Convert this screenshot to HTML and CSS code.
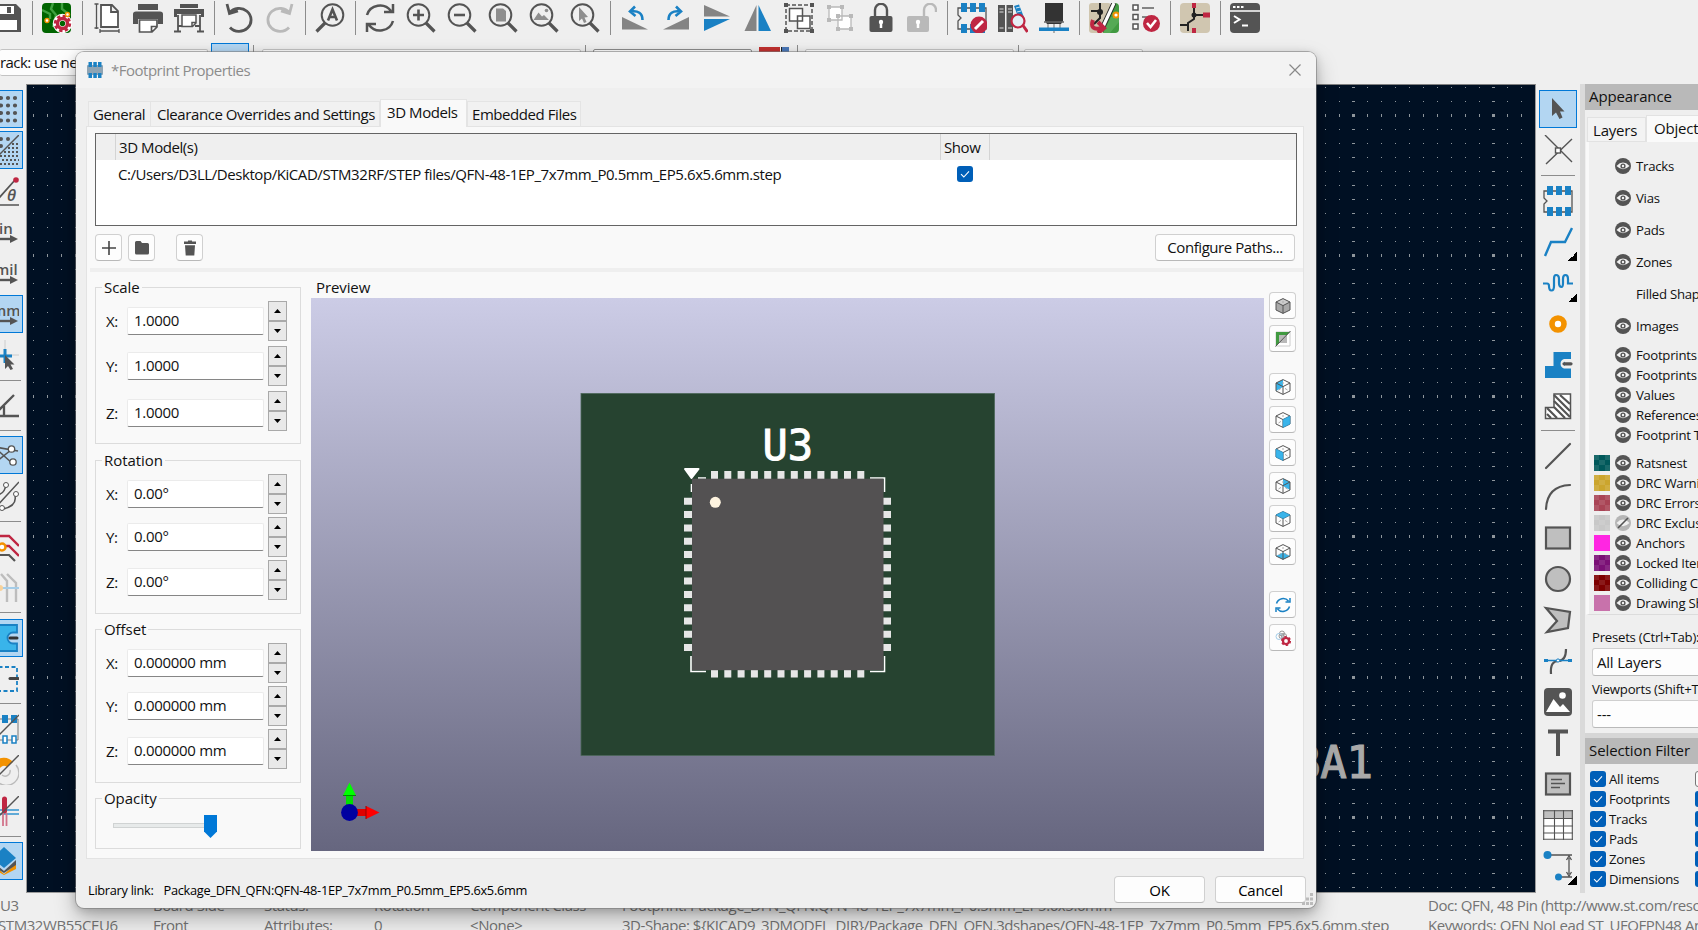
FILE: index.html
```html
<!DOCTYPE html>
<html lang="en">
<head>
<meta charset="utf-8">
<title>Footprint Properties</title>
<link rel="stylesheet" href="styles.css">
</head>
<body>
<svg class="defs" aria-hidden="true">
  <symbol id="eye" viewBox="0 0 16 16"><circle cx="8" cy="8" r="8" fill="#545454"/><path d="M1.5 8Q8 1.2 14.5 8Q8 14.4 1.5 8Z" fill="#f2f2f2"/><circle cx="8" cy="8" r="2.6" fill="#545454"/><circle cx="8" cy="8" r="1.2" fill="#f2f2f2"/></symbol>
  <symbol id="eye-off" viewBox="0 0 16 16"><circle cx="8" cy="8" r="8" fill="#b5b5b5"/><path d="M1.5 8Q8 1.2 14.5 8Q8 14.4 1.5 8Z" fill="#f0f0f0"/><path d="M3 13L13 3" stroke="#545454" stroke-width="1.6"/></symbol>
  <symbol id="check" viewBox="0 0 16 16"><rect width="16" height="16" rx="3" fill="#005fb8"/><path d="M4 8.2L6.8 11L12 5.4" fill="none" stroke="#fff" stroke-width="1.1"/></symbol>
  <symbol id="cube" viewBox="0 0 16 16"><path d="M8 .6L15 4V12L8 15.4L1 12V4ZM1 4L8 7.6L15 4M8 7.6V15.4" fill="none" stroke="#545454" stroke-width="1"/><path d="M8 3V5M3.5 11L6 9.4M12.5 11L10 9.4" stroke="#aaa" fill="none"/></symbol>
  <symbol id="lens" viewBox="0 0 30 30"><circle cx="12.5" cy="12" r="10.8" fill="none" stroke="#545454" stroke-width="2"/><path d="M20 20L28.5 28.5" stroke="#545454" stroke-width="3.2"/></symbol>
  <symbol id="swatch" viewBox="0 0 16 16"><rect width="16" height="16" fill="currentColor"/><path d="M0 0H5V5H0ZM11 0H16V5H11ZM5 5H11V10H5ZM0 10H5V16H0ZM11 10H16V16H11Z" fill="#fff" opacity=".1"/></symbol>
  <symbol id="fp" viewBox="0 0 30 30"><path d="M1 5H29V26H1V18L4 15L1 12Z" fill="none" stroke="#545454" stroke-width="1.3"/><path d="M4 0H10V9H4ZM13 0H19V9H13ZM22 0H28V9H22ZM4 21H10V30H4ZM13 21H19V30H13ZM22 21H28V30H22Z" fill="#1a81c4"/></symbol>
</svg>

<div class="topbar">
  <div class="tool"><svg viewBox="0 0 30 30"><path d="M1 1H24L29 6V29H1Z" fill="#545454"/><path d="M6 3H22V11H6ZM5 17H25V27H5Z" fill="#fff"/><path d="M15 4H19V10H15Z" fill="#545454"/></svg></div><i class="vsep"></i>
  <div class="tool"><svg viewBox="0 0 30 30"><rect width="29" height="30" rx="4" fill="#006400"/><path d="M0 7L8 11V16M11 0L9 6L14 12L11 24M20 0V6L25 10" stroke="#3fa03f" stroke-width="2.4" fill="none"/><g stroke="#bf2642" fill="none"><circle cx="20.5" cy="20.5" r="6.2" stroke="#fff" stroke-width="7"/><circle cx="20.5" cy="20.5" r="5" stroke-width="3.4"/><circle cx="20.5" cy="20.5" r="7.4" stroke-width="2.6" stroke-dasharray="3.4 2.4"/></g><circle cx="5" cy="17.5" r="2" fill="#fff" stroke="#f39200" stroke-width="1.4"/><circle cx="25.5" cy="11.5" r="2" fill="#fff" stroke="#f39200" stroke-width="1.4"/></svg></div><i class="vsep"></i>
  <div class="tool"><svg viewBox="0 0 30 30"><path d="M9 2H20L26 8V24H9ZM19 2V9H26" fill="#fff" stroke="#545454" stroke-width="1.8"/><path d="M4.500 1V26M2.500 1H6.500M2.500 25H6.500M8 28H27M8 26V30M27 26V30" stroke="#545454" stroke-width="1.3"/></svg></div>
  <div class="tool"><svg viewBox="0 0 30 30"><path d="M5 1H25V7H5ZM0 11Q0 8.500 3 8.500H27Q30 8.500 30 11V21H25V16H5V21H0Z" fill="#545454"/><path d="M6.500 17H24V24L19 29H6.500ZM18.500 29V23.500H24" fill="#fff" stroke="#545454" stroke-width="1.7"/></svg></div>
  <div class="tool"><svg viewBox="0 0 30 30"><path d="M6 1H24V5H6ZM0 6H30V14H27V11H3V14H0Z" fill="#545454"/><path d="M4 12V29M26 12V29M0 28.500H7M23 28.500H30M4 23H9M21 23H26" stroke="#545454" stroke-width="1.8"/><path d="M8 12H22V20L18.500 23.500H8ZM18 23V19.500H22" fill="#fff" stroke="#545454" stroke-width="1.5"/></svg></div><i class="vsep"></i>
  <div class="tool"><svg viewBox="0 0 30 30"><path d="M3 1L5.500 10.500L14 8M5.500 10A12 11.500 0 1 1 6 24.500" fill="none" stroke="#545454" stroke-width="2.800"/></svg></div>
  <div class="tool"><svg viewBox="0 0 30 30"><path d="M27 1L24.500 10.500L16 8M24.500 10A12 11.500 0 1 0 24 24.500" fill="none" stroke="#b9b9b9" stroke-width="2.800"/></svg></div><i class="vsep"></i>
  <div class="tool"><svg viewBox="0 0 30 30"><circle cx="17.500" cy="12" r="10.800" fill="none" stroke="#545454" stroke-width="2"/><path d="M10 20L1.500 28.500" stroke="#545454" stroke-width="3.200"/><path d="M13 17.500L17.500 6.500L22 17.500M14.500 14H20.500" fill="none" stroke="#545454" stroke-width="2.600"/></svg></div><i class="vsep"></i>
  <div class="tool"><svg viewBox="0 0 30 30"><path d="M2 12A13.500 13 0 0 1 26 8M28 1V9H19M28 18A13.500 13 0 0 1 4 22M2 29V21H11" fill="none" stroke="#545454" stroke-width="2.500"/></svg></div>
  <div class="tool"><svg viewBox="0 0 30 30"><use href="#lens"/><path d="M7 12H18M12.500 6.500V17.500" stroke="#545454" stroke-width="2.600"/></svg></div>
  <div class="tool"><svg viewBox="0 0 30 30"><use href="#lens"/><path d="M7 12H18" stroke="#545454" stroke-width="2.600"/></svg></div>
  <div class="tool"><svg viewBox="0 0 30 30"><use href="#lens"/><path d="M8 5.500H15L18 8V18.500H8Z" fill="#8e8e8e"/></svg></div>
  <div class="tool"><svg viewBox="0 0 30 30"><use href="#lens"/><path d="M4.500 17L9.500 9.500L13 13.500L15 12L20 17Z" fill="#8e8e8e"/><circle cx="17.500" cy="7.500" r="1.800" fill="#8e8e8e"/></svg></div>
  <div class="tool"><svg viewBox="0 0 30 30"><use href="#lens"/><path d="M9 4V18L12 15.500L14 20L16.500 19L14.500 14.500L18 14Z" fill="#8e8e8e"/></svg></div><i class="vsep"></i>
  <div class="tool"><svg viewBox="0 0 30 30"><path d="M2 14L28 26.500H2Z" fill="#848484"/><path d="M22.500 17C22.500 10 18 7.500 11 8.500M15 3.500L10 8.500L15.500 13" fill="none" stroke="#1a81c4" stroke-width="2.600"/></svg></div>
  <div class="tool"><svg viewBox="0 0 30 30"><path d="M28 14L2 26.500H28Z" fill="#848484"/><path d="M7.500 17C7.500 10 12 7.500 19 8.500M15 3.500L20 8.500L14.500 13" fill="none" stroke="#1a81c4" stroke-width="2.600"/></svg></div>
  <div class="tool"><svg viewBox="0 0 30 30"><path d="M2 2L28 13.500H2Z" fill="#848484"/><path d="M2 16H28L2 28Z" fill="#1a81c4"/></svg></div>
  <div class="tool"><svg viewBox="0 0 30 30"><path d="M13.500 2V28H1.500Z" fill="#848484"/><path d="M15.500 2V28H28Z" fill="#1a81c4"/></svg></div>
  <div class="tool"><svg viewBox="0 0 30 30"><rect x="2" y="2" width="26" height="26" fill="none" stroke="#545454" stroke-width="1.500" stroke-dasharray="4 2"/><path d="M0 0H4V4H0ZM26 0H30V4H26ZM0 26H4V30H0ZM26 26H30V30H26Z" fill="#545454"/><path d="M5.500 5.500H18.500V18H5.500ZM13.500 13H26V25.500H13.500Z" fill="#fff" stroke="#545454" stroke-width="1.500"/></svg></div>
  <div class="tool"><svg viewBox="0 0 30 30"><path d="M4 4H17V17H4ZM13 13H26V26H13Z" fill="#fff" stroke="#b9b9b9" stroke-width="1.300"/><path d="M2 2H6V6H2ZM15 2H19V6H15ZM2 15H6V19H2ZM11 11H15V15H11ZM24 11H28V15H24ZM11 24H15V28H11ZM24 24H28V28H24Z" fill="#b9b9b9"/></svg></div>
  <div class="tool"><svg viewBox="0 0 30 30"><path d="M9 14V7A6 6.200 0 0 1 21 7V14" fill="none" stroke="#545454" stroke-width="2.400"/><rect x="3.500" y="13" width="23" height="16" rx="2" fill="#545454"/><path d="M15 18V25" stroke="#fff" stroke-width="2.500"/><circle cx="15" cy="19" r="2.200" fill="#fff"/></svg></div>
  <div class="tool"><svg viewBox="0 0 30 30"><path d="M17 14V7A6 6.200 0 0 1 29 7V9" fill="none" stroke="#b9b9b9" stroke-width="2.400"/><rect x="0" y="13" width="22" height="16" rx="2" fill="#b9b9b9"/><path d="M11 18V25" stroke="#fff" stroke-width="2.500"/><circle cx="11" cy="19" r="2.200" fill="#fff"/></svg></div><i class="vsep"></i>
  <div class="tool"><svg viewBox="0 0 30 30"><use href="#fp"/><circle cx="22" cy="22" r="8.500" fill="#bf2642"/><path d="M18 26L26 18" stroke="#fff" stroke-width="3"/></svg></div>
  <div class="tool"><svg viewBox="0 0 30 30"><path d="M0 2H7V29H0ZM8.500 2H15V29H8.500Z" fill="#545454"/><path d="M1.500 6H5.500M1.500 9H5.500M10 6H14M10 9H14M1.500 25H5.500M10 25H14" stroke="#ddd"/><path d="M16 3L21 1.500L27 17L22 19Z" fill="#1a81c4"/><path d="M18 5L22 4M19 9L23 8" stroke="#cfe5f3"/><circle cx="20" cy="18" r="6.500" fill="#e5eef5" stroke="#bf2642" stroke-width="2.200"/><path d="M25 22.500L29.500 29" stroke="#bf2642" stroke-width="3"/></svg></div>
  <div class="tool"><svg viewBox="0 0 30 30"><path d="M9 20V25M21 20V25M15 20V30" stroke="#999" stroke-width="1.500"/><path d="M6 0H24V18L22 21H8L6 18Z" fill="#333"/><path d="M5 19H25" stroke="#666" stroke-width="1.500"/><path d="M0 24.500H30V28H0Z" fill="#1a81c4"/></svg></div><i class="vsep"></i>
  <div class="tool"><svg viewBox="0 0 30 30"><rect width="22" height="30" rx="3" fill="#cfc5ae"/><path d="M26 0Q30 0 30 4V26Q30 30 26 30H14Z" fill="#419a41"/><path d="M30 19L21 30H14L22 14H30Z" fill="#55a955"/><path d="M25 0L12 28" stroke="#222" stroke-width="5"/><path d="M25 0L12 28" stroke="#fff" stroke-width="3.200"/><path d="M11 0V15L5 21M2 8H11" fill="none" stroke="#222" stroke-width="2"/><circle cx="11" cy="9" r="3" fill="#222"/><circle cx="27" cy="12" r="2.600" fill="#fff" stroke="#f39200" stroke-width="2"/><path d="M4 17Q0 28 13 25M9 19L15 25L9 30" fill="none" stroke="#bf2642" stroke-width="4"/></svg></div>
  <div class="tool"><svg viewBox="0 0 30 30"><path d="M3 2H8V7H3ZM3 11.500H8V16.500H3ZM3 21H8V26H3Z" fill="#fff" stroke="#545454" stroke-width="1.500"/><path d="M12 5H24M12 14H18" stroke="#848484" stroke-width="2"/><circle cx="21.500" cy="20.500" r="8.500" fill="#bf2642"/><path d="M17 20L20.500 24L26 17" fill="none" stroke="#fff" stroke-width="2.600"/></svg></div><i class="vsep"></i>
  <div class="tool"><svg viewBox="0 0 30 30"><rect width="30" height="30" rx="4" fill="#d0c6b0"/><path d="M14 5V12M14 12H24M14 12V16L8 20V28M0 22H8" fill="none" stroke="#222" stroke-width="2"/><circle cx="14" cy="12" r="2.500" fill="#222"/><path d="M12 0H16V5H12ZM23 9.500H30V14.500H23ZM12 25H16V30H12Z" fill="#bf2642"/></svg></div><i class="vsep"></i>
  <div class="tool"><svg viewBox="0 0 30 30"><rect width="30" height="30" rx="4" fill="#545454"/><path d="M0 8H30" stroke="#fff" stroke-width="1.500"/><path d="M3 4H5.500M7 4H9.500M11 4H13.500" stroke="#fff" stroke-width="2"/><path d="M4 13L9.500 16.500L4 20M12 22.500H18" fill="none" stroke="#fff" stroke-width="2"/></svg></div>
</div>

<div class="subbar">
  <div class="combo first">rack: use netclass width</div><div class="toggle"></div><i></i><div class="combo c2"></div><i></i><div class="combo c3"></div><div class="flag"></div><i></i><div class="combo c4"></div><i></i><div class="combo c5"></div>
</div>

<div class="workspace">
  <div class="leftbar">
    <div class="tool on"><svg viewBox="0 0 30 30"><g stroke="#545454" stroke-width="4.200" stroke-linecap="round" stroke-dasharray="0 7"><path d="M5 4H27M5 11.500H27M5 19H27M5 26.500H27"/></g></svg></div>
    <div class="tool on"><svg viewBox="0 0 30 30"><path d="M30 0L0 30" stroke="#545454" stroke-width="1.500"/><path d="M12 4H20M12 11H14" stroke="#545454" stroke-width="4" stroke-linecap="round" stroke-dasharray="0 7"/><path d="M23 9H30M19 13H30M15 17H30M11 21H30M9 25H30M7 29H30" stroke="#545454" stroke-width="2" stroke-dasharray="2 2"/></svg></div>
    <div class="tool"><svg viewBox="0 0 30 30"><path d="M10 22L26 4M0 29H30" stroke="#545454" stroke-width="1.700"/><circle cx="27" cy="4" r="2.800" fill="#bf2642"/><text x="18" y="25" class="ico it">θ</text></svg></div>
    <div class="tool"><svg viewBox="0 0 30 30"><text x="10" y="17" class="ico">in</text><path d="M0 22H24" stroke="#545454" stroke-width="2.400"/><path d="M21 18L29 22L21 26Z" fill="#545454"/></svg></div>
    <div class="tool"><svg viewBox="0 0 30 30"><text x="6" y="17" class="ico">mil</text><path d="M0 22H24" stroke="#545454" stroke-width="2.400"/><path d="M21 18L29 22L21 26Z" fill="#545454"/></svg></div>
    <div class="tool on"><svg viewBox="0 0 30 30"><text x="3" y="17" class="ico">mm</text><path d="M0 22H24" stroke="#545454" stroke-width="2.400"/><path d="M21 18L29 22L21 26Z" fill="#545454"/></svg></div>
    <div class="tool"><svg viewBox="0 0 30 30"><path d="M16 0V15H30" stroke="#ccc" fill="none"/><path d="M9 16H23M16 9V23" stroke="#1a81c4" stroke-width="3"/><path d="M16 15V29L19 26L21.500 30L24 29L21.500 24.500H25.500Z" fill="#545454"/></svg></div><i class="hsep"></i>
    <div class="tool"><svg viewBox="0 0 30 30"><path d="M3 26H30M4 26L25 5M15 16V26" fill="none" stroke="#545454" stroke-width="2.300"/></svg></div><i class="hsep"></i>
    <div class="tool on"><svg viewBox="0 0 30 30"><path d="M2 4L24 24M6 7L29 11M2 26L22 10" stroke="#545454" stroke-width="1.500"/><circle cx="22.500" cy="9" r="3.200" fill="#fff" stroke="#545454" stroke-width="1.300"/><circle cx="24" cy="22" r="3.200" fill="#fff" stroke="#545454" stroke-width="1.300"/></svg></div>
    <div class="tool"><svg viewBox="0 0 30 30"><path d="M30 1L8 25M17 3Q16 13 8 14M26 15Q28 25 14 28" fill="none" stroke="#545454" stroke-width="1.500"/><circle cx="17" cy="4" r="2.500" fill="#fff" stroke="#545454"/><circle cx="27" cy="13" r="2.500" fill="#fff" stroke="#545454"/><circle cx="13" cy="27" r="2.500" fill="#fff" stroke="#545454"/></svg></div><i class="hsep"></i>
    <div class="tool"><svg viewBox="0 0 30 30"><path d="M0 4H20L30 14M0 14H20L30 24" fill="none" stroke="#bf2642" stroke-width="2.400"/><path d="M6 23H20L26 29" fill="none" stroke="#545454" stroke-width="2.200"/><circle cx="13" cy="15" r="3.500" fill="#fff" stroke="#f39200" stroke-width="2.500"/></svg></div>
    <div class="tool"><svg viewBox="0 0 30 30"><path d="M12 1L18 8V29M18 1L27 10V29" fill="none" stroke="#bdbdbd" stroke-width="2.400"/><path d="M9 15H30" stroke="#a5cde8" stroke-width="2"/><circle cx="11" cy="15" r="3" fill="#f8d29b"/></svg></div><i class="hsep"></i>
    <div class="tool on"><svg viewBox="0 0 30 30"><path d="M0 2H28V9.500H24A5.500 5.500 0 0 0 24 20.500H28V28H0Z" fill="#39b4ea" stroke="#1a81c4" stroke-width="1.800"/><path d="M21 15H28" stroke="#333" stroke-width="3" stroke-linecap="round"/></svg></div>
    <div class="tool"><svg viewBox="0 0 30 30"><rect x="3" y="3" width="25" height="24" fill="none" stroke="#1a81c4" stroke-width="1.800" stroke-dasharray="4 2.500"/><path d="M21 14.500H29" stroke="#444" stroke-width="3" stroke-linecap="round"/></svg></div><i class="hsep"></i>
    <div class="tool"><svg viewBox="0 0 30 30"><path d="M0 5H29V26H0" fill="none" stroke="#777"/><path d="M4 1H10V9H4ZM13 1H19V9H13ZM22 1H28V9H22Z" fill="#1a81c4"/><path d="M14 22H18V29H14ZM23 22H27V29H23Z" fill="#fff" stroke="#1a81c4" stroke-width="1.500"/><path d="M30 1L4 27" stroke="#545454" stroke-width="1.400"/></svg></div>
    <div class="tool"><svg viewBox="0 0 30 30"><path d="M5 24A12 12 0 0 1 24 7L18 12A5 5 0 0 0 11 19Z" fill="#f39200"/><path d="M27 10A12 12 0 0 1 8 26M21 15A5 5 0 0 1 13 20" fill="none" stroke="#bbb" stroke-width="1.400"/><path d="M30 0L2 28" stroke="#545454" stroke-width="1.400"/></svg></div>
    <div class="tool"><svg viewBox="0 0 30 30"><path d="M4 14H30M4 18H30" stroke="#60aad7" stroke-width="2"/><path d="M15.500 3V15" stroke="#bf2642" stroke-width="5" stroke-linecap="round"/><path d="M14 17V30M17.500 17V30" stroke="#d2738a" stroke-width="1.800"/><path d="M30 0L2 28" stroke="#545454" stroke-width="1.400"/></svg></div><i class="hsep"></i>
    <div class="tool on"><svg viewBox="0 0 30 30"><path d="M4 18L15 28L27 18V23L15 29L4 23Z" fill="#f39200"/><path d="M4 16L15 25L27 14V19L15 27L4 20Z" fill="#545454"/><path d="M15 1L27 12L15 22L3 12Z" fill="#1a81c4"/></svg></div>
  </div>

  <div class="board">
    <svg id="grid" width="1508" height="808" shape-rendering="crispEdges"></svg>
    <span class="silk">BA1</span>
  </div>

  <div class="rightbar">
    <div class="tool on"><svg viewBox="0 0 30 30"><path d="M9 4V22L13 18.500L16.500 25L19.500 23.500L17 17.500H21.500Z" fill="#545454"/></svg></div>
    <div class="tool"><svg viewBox="0 0 30 30"><path d="M2 0L29 27M29 4L3 29" stroke="#545454" stroke-width="1.400"/><rect x="12.500" y="13" width="5" height="5" fill="#fff" stroke="#545454" stroke-width="1.400"/></svg></div><i class="hsep"></i>
    <div class="tool"><svg viewBox="0 0 30 30"><use href="#fp"/></svg></div>
    <div class="tool"><svg viewBox="0 0 30 30"><path d="M2 29L8 15H22L29 1" fill="none" stroke="#1a81c4" stroke-width="2.400"/></svg><b></b></div>
    <div class="tool"><svg viewBox="0 0 30 30"><path d="M0 15.500H4Q6 15.500 6 18Q6 22.500 8.500 22.500Q11 22.500 11 18V11Q11 7 13 7Q16 7 16 11V15Q16 19 18.500 19Q20 19 20 15V11Q20 7 22.500 7Q25 7 25 11V15.500H30" fill="none" stroke="#1a81c4" stroke-width="2.200"/></svg><b></b></div>
    <div class="tool"><svg viewBox="0 0 30 30"><circle cx="15" cy="15" r="6" fill="#fff" stroke="#f39200" stroke-width="5.600"/></svg></div>
    <div class="tool"><svg viewBox="0 0 30 30"><path d="M10.500 2H28V28H2V16H10.500Z" fill="#1a81c4"/><path d="M28 9H21A5 5 0 0 0 21 18.500H28V16H22A2.500 2.500 0 0 1 22 11.500H28Z" fill="#efefef"/><path d="M28 11H22V16.500H28Z" fill="#efefef"/><path d="M21 13.800H28" stroke="#545454" stroke-width="3.200" stroke-linecap="round"/></svg></div>
    <div class="tool"><svg viewBox="0 0 30 30"><path d="M11 3H27.500V27.500H2.500V16.500H11Z" fill="#fff" stroke="#545454" stroke-width="1.500"/><path d="M11 4L27 20M17 4L27 13M11 10L27 26M11 16L22 27M4 17L14 27M4 23L8 27" stroke="#545454" stroke-width="2.200"/></svg></div><i class="hsep"></i>
    <div class="tool"><svg viewBox="0 0 30 30"><path d="M3 27L27 3" stroke="#545454" stroke-width="2.200" stroke-linecap="round"/></svg></div>
    <div class="tool"><svg viewBox="0 0 30 30"><path d="M3 27Q4 4 27 3" fill="none" stroke="#545454" stroke-width="2.200" stroke-linecap="round"/></svg></div>
    <div class="tool"><svg viewBox="0 0 30 30"><rect x="3" y="4.500" width="24" height="21" fill="#bfbfbf" stroke="#545454" stroke-width="2.200"/></svg></div>
    <div class="tool"><svg viewBox="0 0 30 30"><circle cx="15" cy="15" r="12" fill="#bfbfbf" stroke="#545454" stroke-width="2.200"/></svg></div>
    <div class="tool"><svg viewBox="0 0 30 30"><path d="M3 3L27 7L25 23L4 27L14 16Z" fill="#bfbfbf" stroke="#545454" stroke-width="2.200"/></svg></div>
    <div class="tool"><svg viewBox="0 0 30 30"><path d="M8 28Q7 15 15 15Q23 15 23 3" fill="none" stroke="#545454" stroke-width="2.200"/><path d="M3 14.500H27" stroke="#1a81c4" stroke-width="1.500"/><path d="M1 13H5V16H1ZM25 13H29V16H25Z" fill="#1a81c4"/><circle cx="15" cy="14.500" r="1.600" fill="#fff" stroke="#1a81c4"/></svg></div>
    <div class="tool"><svg viewBox="0 0 30 30"><rect x="1" y="1" width="28" height="28" rx="4" fill="#545454"/><path d="M3 25L10.500 12L17 20L20 17L27 25Z" fill="#fff"/><circle cx="19.500" cy="8.500" r="3.300" fill="#fff"/></svg></div>
    <div class="tool"><svg viewBox="0 0 30 30"><path d="M5 3.500H25M15 3.500V28" stroke="#545454" stroke-width="4"/></svg></div>
    <div class="tool"><svg viewBox="0 0 30 30"><rect x="3" y="4.500" width="24" height="21" fill="#bfbfbf" stroke="#545454" stroke-width="2.200"/><path d="M8 10.500H19M8 14.500H22M8 18.500H17" stroke="#545454" stroke-width="1.500"/></svg></div>
    <div class="tool"><svg viewBox="0 0 30 30"><path d="M0 0H30V30H0Z" fill="#fff"/><path d="M0 0H30V8H0Z" fill="#bfbfbf"/><path d="M.7 0V30M11.500 0V30M20.500 0V30M29.300 0V30M0 .7H30M0 8.500H30M0 16H30M0 23H30M0 29.300H30" stroke="#545454" stroke-width="1.100"/></svg></div>
    <div class="tool"><svg viewBox="0 0 30 30"><path d="M4 4H29M15 26H29M26 7V23M23.500 9L26 5L28.500 9M23.500 21L26 25L28.500 21" fill="none" stroke="#545454" stroke-width="1.300"/><circle cx="4.500" cy="4" r="4" fill="#1a81c4"/><circle cx="15.500" cy="26" r="3.500" fill="#1a81c4"/></svg><b></b></div>
  </div>

  <div class="side">
    <div class="head">Appearance</div>
    <div class="sidetabs"><span>Layers</span><span class="cur">Objects</span></div>
    <div class="objects">
      <div class="obj tall"><i></i><svg><use href="#eye"/></svg>Tracks</div>
      <div class="obj tall"><i></i><svg><use href="#eye"/></svg>Vias</div>
      <div class="obj tall"><i></i><svg><use href="#eye"/></svg>Pads</div>
      <div class="obj tall"><i></i><svg><use href="#eye"/></svg>Zones</div>
      <div class="obj tall"><i></i><i></i>Filled Shapes</div>
      <div class="obj tall"><i></i><svg><use href="#eye"/></svg>Images</div>
      <div class="obj gap3"><i></i><svg><use href="#eye"/></svg>Footprints Front</div>
      <div class="obj"><i></i><svg><use href="#eye"/></svg>Footprints Back</div>
      <div class="obj"><i></i><svg><use href="#eye"/></svg>Values</div>
      <div class="obj"><i></i><svg><use href="#eye"/></svg>References</div>
      <div class="obj"><i></i><svg><use href="#eye"/></svg>Footprint Text</div>
      <div class="obj gap8"><svg class="s1"><use href="#swatch"/></svg><svg><use href="#eye"/></svg>Ratsnest</div>
      <div class="obj"><svg class="s2"><use href="#swatch"/></svg><svg><use href="#eye"/></svg>DRC Warnings</div>
      <div class="obj"><svg class="s3"><use href="#swatch"/></svg><svg><use href="#eye"/></svg>DRC Errors</div>
      <div class="obj"><svg class="s4"><use href="#swatch"/></svg><svg><use href="#eye-off"/></svg>DRC Exclusions</div>
      <div class="obj"><i class="s5"></i><svg><use href="#eye"/></svg>Anchors</div>
      <div class="obj"><svg class="s6"><use href="#swatch"/></svg><svg><use href="#eye"/></svg>Locked Item Shadow</div>
      <div class="obj"><svg class="s7"><use href="#swatch"/></svg><svg><use href="#eye"/></svg>Colliding Courtyards</div>
      <div class="obj"><i class="s8"></i><svg><use href="#eye"/></svg>Drawing Sheet</div>
    </div>
    <div class="presets"><label>Presets (Ctrl+Tab):</label><div class="select">All Layers</div><label>Viewports (Shift+Tab):</label><div class="select">---</div></div>
    <div class="head filter">Selection Filter</div>
    <div class="checks">
      <div><svg><use href="#check"/></svg><span>All items</span><i></i></div>
      <div><svg><use href="#check"/></svg><span>Footprints</span><svg><use href="#check"/></svg></div>
      <div><svg><use href="#check"/></svg><span>Tracks</span><svg><use href="#check"/></svg></div>
      <div><svg><use href="#check"/></svg><span>Pads</span><svg><use href="#check"/></svg></div>
      <div><svg><use href="#check"/></svg><span>Zones</span><svg><use href="#check"/></svg></div>
      <div><svg><use href="#check"/></svg><span>Dimensions</span><svg><use href="#check"/></svg></div>
    </div>
  </div>
</div>

<div class="status">
  <div><p>U3</p><p class="part">STM32WB55CEU6</p></div><div><p>Board Side</p><p>Front</p></div><div><p>Status:</p><p>Attributes:</p></div><div><p>Rotation</p><p>0</p></div><div><p>Component Class</p><p>&lt;None&gt;</p></div>
  <div><p>Footprint: Package_DFN_QFN:QFN-48-1EP_7x7mm_P0.5mm_EP5.6x5.6mm</p><p class="shape">3D-Shape: ${KICAD9_3DMODEL_DIR}/Package_DFN_QFN.3dshapes/QFN-48-1EP_7x7mm_P0.5mm_EP5.6x5.6mm.step</p></div>
  <div><p>Doc: QFN, 48 Pin (http://www.st.com/resource</p><p>Keywords: QFN NoLead ST_UFQFPN48 Analog</p></div>
</div>

<div class="dialog">
  <div class="title"><svg width="16" height="16" viewBox="0 0 16 16"><rect y="3" width="16" height="10" rx="1" fill="#8ea4b4"/><path d="M1.500 0H5V5H1.500ZM6.300 0H9.800V5H6.300ZM11 0H14.500V5H11ZM1.500 11H5V16H1.500ZM6.300 11H9.800V16H6.300ZM11 11H14.500V16H11Z" fill="#1a81c4"/></svg><span>*Footprint Properties</span><svg class="close" width="12" height="12"><path d="M.5 .5L11.500 11.500M11.500 .5L.5 11.500" stroke="#888" stroke-width="1.200"/></svg></div>
  <div class="tabs"><span class="t1">General</span><span class="t2">Clearance Overrides and Settings</span><span class="t3 cur">3D Models</span><span class="t4">Embedded Files</span></div>
  <div class="panel">
    <div class="table">
      <div class="thead"><i></i><span class="name">3D Model(s)</span><span class="show">Show</span></div>
      <div class="trow"><span class="path">C:/Users/D3LL/Desktop/KiCAD/STM32RF/STEP files/QFN-48-1EP_7x7mm_P0.5mm_EP5.6x5.6mm.step</span><svg width="16" height="16"><use href="#check"/></svg></div>
    </div>
    <div class="actions">
      <div class="btn"><svg viewBox="0 0 16 16"><path d="M8 1V15M1 8H15" stroke="#444" stroke-width="1.600"/></svg></div>
      <div class="btn"><svg viewBox="0 0 16 16"><path d="M1 2.500Q1 1 2.500 1H6.500L8 3H13.500Q15 3 15 4.500V13Q15 14.500 13.500 14.500H2.500Q1 14.500 1 13Z" fill="#545454"/></svg></div>
      <div class="btn trash"><svg viewBox="0 0 16 16"><path d="M2 1.500H6V.5H10V1.500H14V4H2ZM3 5.300H13L12.300 15.500H3.700Z" fill="#545454"/></svg></div>
      <div class="btn configure">Configure Paths...</div>
    </div>
    <div class="splitter"></div>
    <div class="content">
      <div class="groups">
        <div class="group scale"><div class="legend">Scale</div>
          <div class="row"><label>X:</label><div class="field">1.0000</div><div class="spin"><i></i><i></i></div></div>
          <div class="row"><label>Y:</label><div class="field">1.0000</div><div class="spin"><i></i><i></i></div></div>
          <div class="row last"><label>Z:</label><div class="field">1.0000</div><div class="spin"><i></i><i></i></div></div></div>
        <div class="group rot"><div class="legend">Rotation</div>
          <div class="row"><label>X:</label><div class="field">0.00°</div><div class="spin"><i></i><i></i></div></div>
          <div class="row"><label>Y:</label><div class="field">0.00°</div><div class="spin"><i></i><i></i></div></div>
          <div class="row last"><label>Z:</label><div class="field">0.00°</div><div class="spin"><i></i><i></i></div></div></div>
        <div class="group"><div class="legend">Offset</div>
          <div class="row"><label>X:</label><div class="field">0.000000 mm</div><div class="spin"><i></i><i></i></div></div>
          <div class="row"><label>Y:</label><div class="field">0.000000 mm</div><div class="spin"><i></i><i></i></div></div>
          <div class="row last"><label>Z:</label><div class="field">0.000000 mm</div><div class="spin"><i></i><i></i></div></div></div>
        <div class="group opacity"><div class="legend">Opacity</div>
          <svg class="slider" width="110" height="24"><rect x=".5" y="8.500" width="103" height="4" fill="#e7eaea" stroke="#d0d3d3"/><path d="M91 0H104V16.500L97.500 23L91 16.500Z" fill="#0078d7"/></svg></div>
      </div>
      <div class="preview">
        <div class="caption">Preview</div>
        <svg class="scene" width="953" height="553" viewBox="311 298 953 553">
          <defs><linearGradient id="sky" x2="0" y2="1"><stop stop-color="#cccce6"/><stop offset="1" stop-color="#66667f"/></linearGradient></defs>
          <rect x="311" y="298" width="953" height="553" fill="url(#sky)"/>
          <rect x="581" y="393.500" width="413.500" height="362" fill="#264330" stroke="#4b6659" stroke-width=".8"/>
          <text x="762.500" y="460" class="ref">U3</text>
          <path d="M691.500 492V484M698 478H706M870 478H884.500V492M691 656V671.500H706M870 671.500H884.500V656" fill="none" stroke="#fff" stroke-width="1.600"/>
          <g stroke="#e6e6e6" stroke-width="8" stroke-dasharray="7 6.300"><path d="M711 475H865M711 673.500H865M688 497.800V652M887 497.800V652"/></g>
          <rect x="692" y="478.700" width="191.500" height="191.500" fill="#535152"/>
          <path d="M685 469H698.500L691.500 478Z" fill="#fff" stroke="#fff" stroke-width="2" stroke-linejoin="round"/>
          <circle cx="715.300" cy="502.300" r="5.500" fill="#fdf3df"/>
          <path d="M346 806V794H353V806Z" fill="#00e000"/><path d="M343 795.500L349.500 782.500L356 795.500Z" fill="#0f0"/><path d="M343 795.500H356" stroke="#008a00"/>
          <path d="M357 809H366V816H357Z" fill="#e00000"/><path d="M366 806L379.500 812.500L366 819Z" fill="#f00"/><path d="M366 806V819" stroke="#900"/>
          <circle cx="349.500" cy="812.500" r="8.400" fill="#0000a0"/>
        </svg>
      </div>
      <div class="views">
        <div class="btn"><svg viewBox="0 0 16 16"><path d="M8 .6L15 4V12L8 15.400L1 12V4Z" fill="#a9a9a9"/><path d="M8 .6L15 4L8 7.600L1 4Z" fill="#ccc"/><use href="#cube"/></svg></div>
        <div class="btn"><svg viewBox="0 0 16 16"><path d="M1 1H15V15H1Z" fill="#fff" stroke="#ccc"/><path d="M1 1H15L1 15Z" fill="#419a41"/><path d="M4 4H12V12H4Z" fill="#b9b9b9"/><path d="M15.500 0L.5 15.500" stroke="#545454"/></svg></div>
        <div class="btn s"><svg viewBox="0 0 16 16"><path d="M1 4L8 .6V8L1 12Z" fill="#39b4ea"/><use href="#cube"/></svg></div>
        <div class="btn"><svg viewBox="0 0 16 16"><use href="#cube"/><path d="M8 7.600L15 4V12L8 15.400Z" fill="#39b4ea" stroke="#2a9cd4" stroke-width=".6"/></svg></div>
        <div class="btn"><svg viewBox="0 0 16 16"><use href="#cube"/><path d="M8 7.600L1 4V12L8 15.400Z" fill="#39b4ea" stroke="#2a9cd4" stroke-width=".6"/></svg></div>
        <div class="btn"><svg viewBox="0 0 16 16"><path d="M8 .6L15 4V12L8 8Z" fill="#39b4ea"/><use href="#cube"/></svg></div>
        <div class="btn"><svg viewBox="0 0 16 16"><use href="#cube"/><path d="M8 .6L15 4L8 7.600L1 4Z" fill="#39b4ea" stroke="#2a9cd4" stroke-width=".6"/></svg></div>
        <div class="btn"><svg viewBox="0 0 16 16"><path d="M8 8.400L15 12L8 15.400L1 12Z" fill="#39b4ea"/><use href="#cube"/></svg></div>
        <div class="btn m"><svg viewBox="0 0 16 16"><path d="M1.500 6.500A7 7 0 0 1 13.500 4M15 1V5H10.500M14.500 9.500A7 7 0 0 1 2.500 12M1 15V11H5.500" fill="none" stroke="#1a81c4" stroke-width="1.500"/></svg></div>
        <div class="btn"><svg viewBox="0 0 16 16"><g fill="none" stroke="#999"><circle cx="7" cy="3.500" r="2.500"/><circle cx="6.500" cy="6" r="2.500"/><circle cx="4" cy="6.500" r="3" stroke="#a5cde8"/><circle cx="9" cy="6" r="2.500"/></g><circle cx="11" cy="11" r="3" fill="none" stroke="#bf2642" stroke-width="2.200"/><circle cx="11" cy="11" r="4.300" fill="none" stroke="#bf2642" stroke-width="1.600" stroke-dasharray="2.400 2.100"/></svg></div>
      </div>
    </div>
  </div>
  <div class="foot"><span>Library link:</span><span class="lib">Package_DFN_QFN:QFN-48-1EP_7x7mm_P0.5mm_EP5.6x5.6mm</span><div class="btn ok">OK</div><div class="btn">Cancel</div></div>
  <svg class="grip" width="11" height="12"><path d="M8 0H11V3H8ZM4 4.500H7V7.500H4ZM8 4.500H11V7.500H8ZM0 9H3V12H0ZM4 9H7V12H4ZM8 9H11V12H8Z" fill="#bbb"/></svg>
</div>
<script src="grid.js"></script>
</body>
</html>
```
FILE: styles.css
```css
* { box-sizing: border-box; }
body { margin: 0; width: 1698px; height: 930px; overflow: hidden; position: relative; background: #efefef; font: 15px/20px "Open Sans", "Noto Sans", sans-serif; color: #111; white-space: nowrap; letter-spacing: -0.43px; }
p { margin: 0; }
.defs { position: absolute; width: 0; height: 0; }

.topbar { display: flex; align-items: center; height: 36px; margin-left: -13.5px; }
.tool { flex: none; display: flex; align-items: center; justify-content: center; width: 41px; height: 36px; }
.tool svg { width: 30px; height: 30px; }
.vsep { flex: none; width: 9px; height: 34px; background: linear-gradient(#8c8c8c, #8c8c8c) center / 1px 100% no-repeat; }

.subbar { display: flex; height: 48px; padding-top: 7px; }
.subbar > i { width: 1px; height: 30px; margin: 2px 5px 0 4px; background: #8c8c8c; }
.combo { height: 27px; margin-top: 6px; border: 1px solid #c3c3c3; background: #fdfdfd; border-radius: 2px; }
.combo.first { width: 208px; margin-right: 3px; border-left: 0; line-height: 24px; letter-spacing: -0.55px; }
.toggle { width: 38px; height: 38px; border: 1px solid #0078d7; background: #b3d6f2; }
.c2 { width: 319px; margin-left: 3px; }
.c3 { width: 159px; margin-left: 2px; border-color: #8c8c8c; }
.flag { width: 30px; height: 26px; margin: 4px 4px 0 7px; background: linear-gradient(90deg, #c1302f 70%, #fff 70% 74%, #222 74% 78%, #4a78b8 78%); }
.c4 { width: 209px; margin-left: 2px; }
.c5 { width: 119px; }

.workspace { display: flex; height: 809px; }
.leftbar, .rightbar { display: flex; flex-direction: column; padding-top: 4.500px; }
.leftbar { width: 26px; flex: none; }
.leftbar .tool, .rightbar .tool { width: 38px; height: 38px; margin: 1.500px 0; border: 1px solid transparent; position: relative; }
.leftbar .tool { margin-left: -15px; }
.leftbar .tool.on, .rightbar .tool.on { background: #b3d6f2; border-color: #0078d7; }
.hsep { flex: none; height: 9.200px; width: 34px; margin-left: 2px; background: linear-gradient(#8c8c8c, #8c8c8c) center / 100% 1px no-repeat; }
.leftbar .hsep { width: 21px; margin-left: 0; }
.rightbar .hsep { height: 9.500px; }
.tool .ico { font: 600 15px "Open Sans", sans-serif; fill: #545454; letter-spacing: 0; }
.tool .it { font-style: italic; font-size: 16px; }
.board { flex: none; width: 1510px; position: relative; overflow: hidden; background: #001023; border: 1px solid #9b9b9b; border-top-color: #808080; }
.board svg { display: block; }
.silk { position: absolute; left: 1267px; top: 653px; font: 44px/50px "DejaVu Sans Mono", monospace; color: #a9a9a9; letter-spacing: -0.2px; -webkit-text-stroke: 1.2px #a9a9a9; }
.rightbar { width: 44px; flex: none; padding-left: 3px; }
.rightbar .tool b { position: absolute; right: -1px; bottom: -1px; width: 9px; height: 9px; background: linear-gradient(135deg, transparent 50%, #000 50%); }

.side { flex: none; width: 118px; border-left: 5px solid #dadada; overflow: hidden; }
.head { height: 26px; padding-left: 4px; background: #b9b9b9; line-height: 25px; letter-spacing: -0.1px; }
.sidetabs { display: flex; align-items: flex-end; height: 32px; padding-left: 2px; line-height: 25px; }
.sidetabs span { flex: none; height: 25px; width: 59px; padding-left: 5px; border: 1px solid #e2e2e2; background: #f3f3f3; letter-spacing: -0.2px; }
.sidetabs .cur { height: 27px; width: 70px; padding-left: 7px; background: #fafafa; border-bottom: 0; }
.objects { height: 473px; margin-left: 1px; padding-top: 7.500px; border-left: 3px solid #f9f9f9; border-bottom: 1px solid #dcdcdc; font-size: 13.200px; letter-spacing: -0.25px; }
.obj { display: flex; align-items: center; height: 20px; padding-left: 5px; }
.obj.tall { height: 32px; }
.obj.gap3 { margin-top: 3px; }
.obj.gap8 { margin-top: 8px; }
.obj svg, .obj i { flex: none; width: 16px; height: 16px; margin-right: 5px; }
.s1 { color: #00585a; } .s2 { color: #cba52d; } .s3 { color: #a94455; } .s4 { color: #c8c8c8; }
.s5 { background: #ff26e2; } .s6 { color: #7b1076; } .s7 { color: #7d0000; } .s8 { background: #c872ab; }
.presets { height: 123px; padding: 12px 0 0 7px; border-bottom: 5px solid #d6d6d6; font-size: 13.200px; letter-spacing: -0.25px; }
.presets label { display: block; height: 21px; line-height: 20px; }
.select { width: 130px; height: 28px; margin-bottom: 3px; padding-left: 4px; border: 1px solid #cfcfcf; border-bottom-color: #b9b9b9; border-radius: 3px; background: #fdfdfd; line-height: 26px; font-size: 15px; letter-spacing: -0.2px; }
.checks { padding: 5px 0 0 5px; font-size: 13.200px; letter-spacing: -0.25px; }
.checks div { display: flex; align-items: center; height: 20px; }
.checks svg, .checks i { flex: none; width: 16px; height: 16px; }
.checks i { border: 1px solid #777; border-radius: 3px; background: #fafafa; }
.checks span { flex: none; width: 86px; margin-left: 3px; }

.status { display: grid; grid-template-columns: 153px 111px 110px 96px 152px 806px 270px; height: 37px; padding-top: 1.500px; color: #737373; }
.part { margin-left: -2px; }
.status .shape { letter-spacing: -0.47px; }

.dialog { position: absolute; left: 76px; top: 52px; width: 1240px; height: 856px; border-radius: 8px; background: #efefef; box-shadow: 0 0 0 1px rgba(120,120,120,.55), 0 10px 22px rgba(0,0,0,.28), 0 2px 10px rgba(0,0,0,.18); }
.title { display: flex; align-items: center; height: 36px; padding: 0 15px 0 11px; border-radius: 8px 8px 0 0; background: #f3f3f3; color: #8c8c8c; letter-spacing: -0.5px; }
.title span { margin-left: 8px; }
.title .close { margin-left: auto; }
.tabs { display: flex; align-items: flex-end; height: 38px; padding-left: 12px; position: relative; }
.tabs span { height: 25px; border: 1px solid #e4e4e4; border-bottom: 0; background: #f1f1f1; line-height: 24px; padding-left: 5px; }
.tabs .t1 { width: 63px; padding-left: 4px; }
.tabs .t2 { width: 229px; padding-left: 6px; border-left: 0; }
.tabs .t4 { width: 114px; padding-left: 4px; }
.tabs .cur { width: 87px; height: 28px; margin-bottom: -1px; padding-left: 6px; background: #f9f9f9; line-height: 25px; }
.panel { width: 1218px; height: 733px; margin-left: 10px; padding: 6px 0 0 8px; border: 1px solid #e3e3e3; background: #f9f9f9; }
.table { width: 1202px; height: 93px; border: 1px solid #646464; background: #fff; }
.thead { display: flex; height: 26px; background: #efefef; line-height: 26px; }
.thead i { width: 20px; border-right: 1px solid #d4d4d4; }
.thead .name { width: 825px; padding-left: 3px; border-right: 1px solid #d4d4d4; }
.thead .show { width: 49px; padding-left: 3px; border-right: 1px solid #d4d4d4; }
.trow { display: flex; align-items: center; height: 28px; padding-left: 22px; }
.path { width: 839px; }
.actions { display: flex; padding: 8px 8px 0 0; }
.btn { display: flex; flex: none; align-items: center; justify-content: center; width: 27px; height: 27px; border: 1px solid #d0d0d0; border-bottom-color: #b9b9b9; border-radius: 4px; background: #fdfdfd; }
.btn svg { width: 16px; height: 16px; }
.actions .btn { margin-right: 6px; }
.actions .trash { margin-left: 15px; }
.actions .configure { width: 140px; margin: 0 0 0 auto; padding-bottom: 1px; }
.splitter { height: 4px; margin: 7px 0 0 -5px; background: #efefef; }
.content { display: flex; }
.groups { width: 216px; padding-top: 15px; }
.group { width: 206px; height: 154px; margin-bottom: 15px; border: 1px solid #dcdcdc; }
.group.scale { height: 157px; margin-bottom: 16px; }
.group.opacity { height: 51px; margin: 0; }
.legend { width: fit-content; height: 22px; margin: -11px 0 2px 6px; padding: 0 2px; line-height: 21px; background: #f9f9f9; letter-spacing: -0.05px; }
.row { display: flex; height: 43px; padding-left: 10px; }
.scale .row { height: 45px; }
.row label { width: 21px; padding-top: 9.500px; }
.field { width: 137px; height: 28px; margin: 6px 4px 0 0; padding-left: 6px; border: 1px solid #ebebeb; border-bottom-color: #868686; border-radius: 2px; background: #fff; line-height: 25px; letter-spacing: -0.3px; }
.row.last label { padding-top: 12px; }
.row.last .field { margin-top: 8px; }
.spin { width: 19px; height: 40px; }
.spin i { display: block; height: 20px; border: 1px solid #a9a9a9; background: #e9e9e9; }
.spin i::after { content: ""; display: block; width: 7px; height: 4px; margin: 7px auto 0 5px; background: #000; clip-path: polygon(50% 0, 100% 100%, 0 100%); }
.spin i + i::after { clip-path: polygon(0 0, 100% 0, 50% 100%); }
.slider { display: block; margin: 5px 0 0 17px; }
.preview { width: 953px; }
.caption { height: 26px; padding: 5px 0 0 5px; line-height: 21px; letter-spacing: -0.1px; }
.scene { display: block; }
.ref { font: 42px "DejaVu Sans Mono", monospace; fill: #fff; stroke: #fff; stroke-width: 1; letter-spacing: 0; }
.views { padding: 20px 0 0 5px; }
.views .btn { margin-bottom: 6px; }
.views .s { margin-top: 21px; }
.views .m { margin-top: 26px; }
.foot { display: flex; align-items: center; height: 61px; padding: 0 10px 0 12px; font-size: 12.800px; letter-spacing: -0.3px; color: #000; }
.lib { margin-left: 10px; }
.foot .btn { width: 91px; margin-left: 10px; font-size: 15px; }
.foot .ok { margin-left: auto; }
.grip { position: absolute; right: 3px; bottom: 3px; }
```
FILE: grid.js
```js
// Draws the canvas grid: a point every 14.04px, emphasised on every tenth row and column.
(function () {
  var step = 14.04, x0 = 1325.4 - 27, y0 = 30.5, d = '';
  for (var i = -94; i < 16; i++) {
    var x = Math.floor(x0 + i * step);
    for (var j = -2; j < 56; j++) {
      var y = Math.floor(y0 + j * step);
      var wide = (i - 2) % 10 === 0, tall = j % 10 === 0;
      d += 'M' + (wide ? x - 1 : x) + ' ' + (tall ? y - 1 : y) + 'h' + (wide ? 3 : 1) + 'v' + (tall ? 3 : 1) + 'h-' + (wide ? 3 : 1) + 'z';
    }
  }
  document.getElementById('grid').innerHTML = '<path fill="#8f969c" d="' + d + '"/>';
})();
```
